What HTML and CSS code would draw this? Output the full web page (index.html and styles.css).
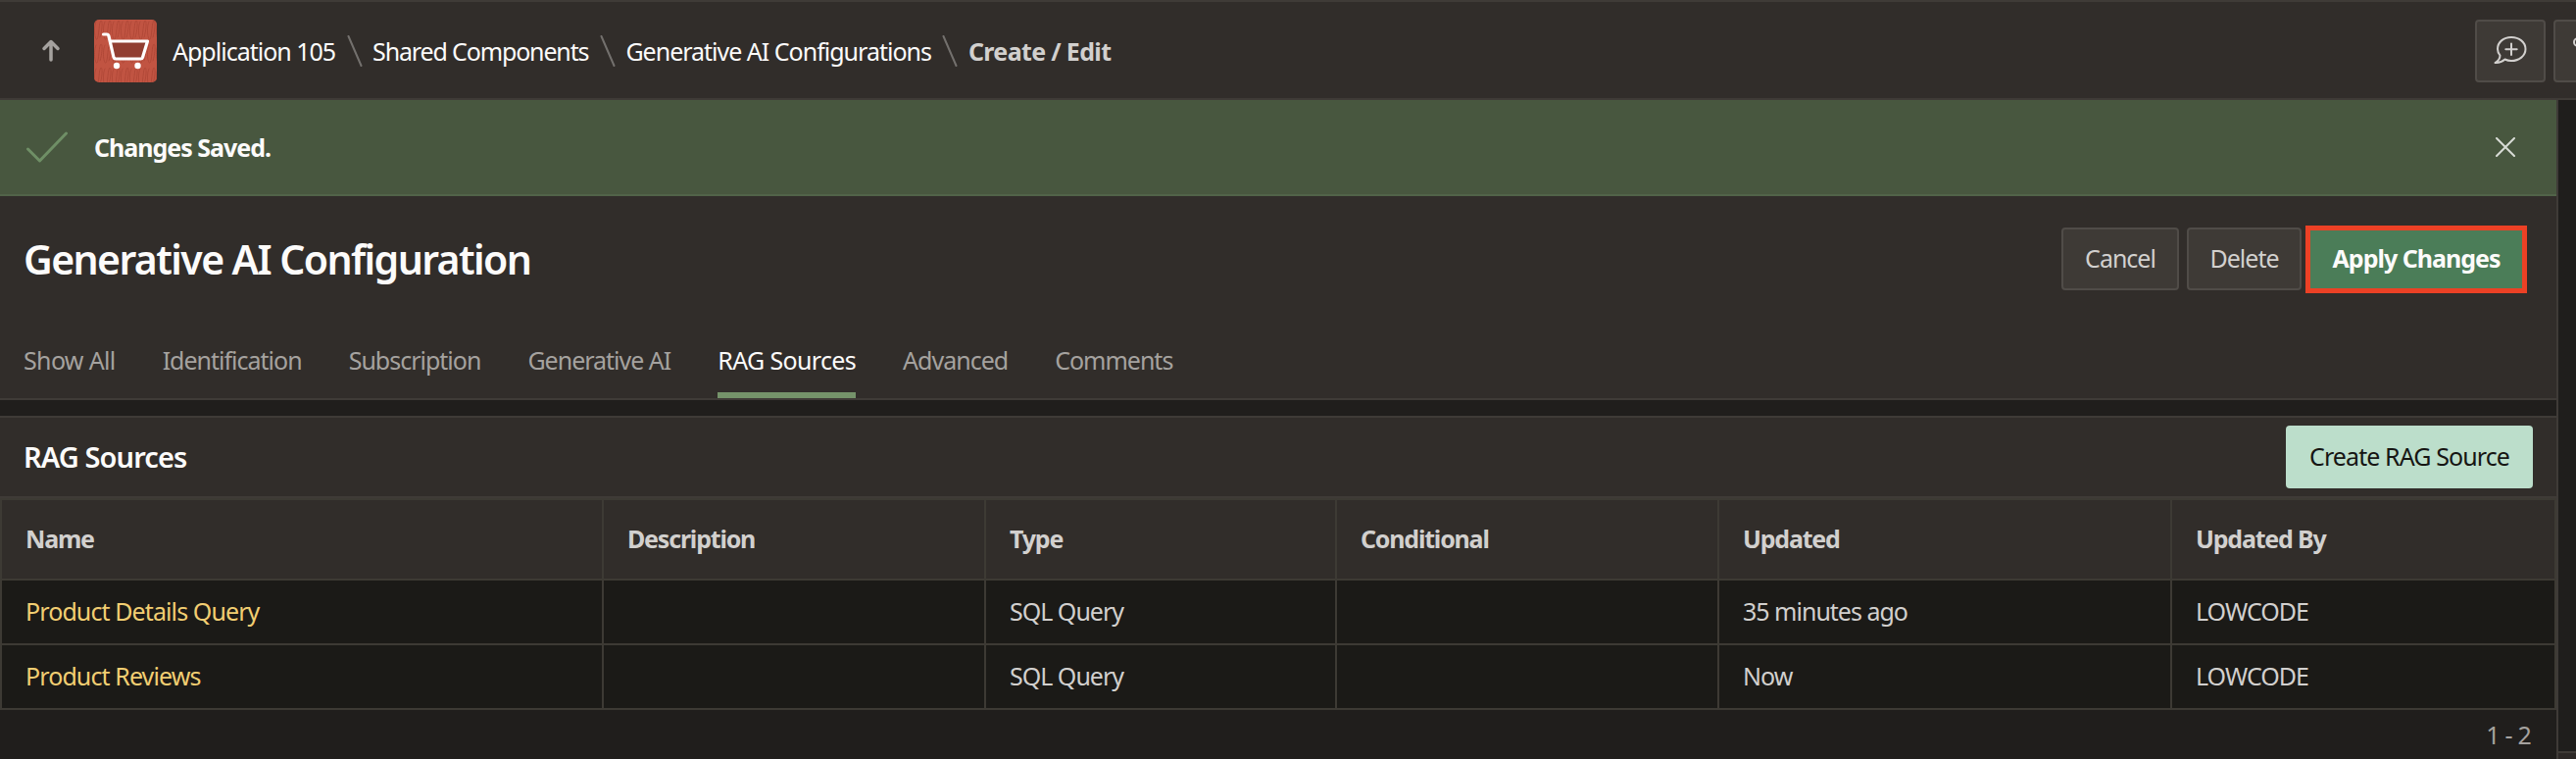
FILE: index.html
```html
<!DOCTYPE html>
<html lang="en">
<head>
<meta charset="utf-8">
<title>Generative AI Configuration</title>
<link rel="stylesheet" href="styles.css">
</head>
<body>
<header class="topbar">
  <svg class="up" viewBox="0 0 24 24"><path d="M12 21V3M5 9.500L12 2.500L19 9.500"/></svg>
  <svg class="app-icon" viewBox="0 0 64 64">
    <defs><pattern id="knit" width="9" height="24" patternUnits="userSpaceOnUse"><path d="M2 2C-1 8 1 22 3 20S5 1 7 1S8 12 6 18"/></pattern></defs>
    <rect width="64" height="64" rx="5" fill="#c15442"/>
    <rect width="64" height="64" rx="5" fill="url(#knit)"/>
    <path class="basket" d="M16 22H55L49 40H20Z"/>
    <path class="cart" d="M9.500 15H13Q14.500 15 15 17L20 38.500Q20.500 40 22 40H47.500Q49 40 49.500 38.500L54.500 22H16.500"/>
    <circle cx="23" cy="47" r="3.200"/><circle cx="44.500" cy="47" r="3.200"/>
  </svg>
  <nav class="crumbs">
    <a>Application 105</a><svg class="sep" viewBox="0 0 16 32"><path d="M1.500 1L14.500 31"/></svg>
    <a class="shared">Shared Components</a><svg class="sep" viewBox="0 0 16 32"><path d="M1.500 1L14.500 31"/></svg>
    <a>Generative AI Configurations</a><svg class="sep" viewBox="0 0 16 32"><path d="M1.500 1L14.500 31"/></svg>
    <b>Create / Edit</b>
  </nav>
  <div class="tools">
    <button class="tool"><svg class="bubble" viewBox="0 0 34 30"><path d="M6.500 20.500C4.500 18 4 16 4 14C4 7 10 2 18 2S32.500 7 32.500 14S26 26 18 26Q14.500 26 11.500 24.500Q7 28.500 1.500 28Q6.500 25 6.500 20.500M18 8.500V20M12.300 14.200H23.700"/></svg></button>
    <button class="tool cut"><svg class="dot" viewBox="0 0 30 30"><circle cx="5" cy="5" r="4"/></svg></button>
  </div>
</header>
<div class="body">
  <main class="main">
    <div class="alert">
      <svg class="check" viewBox="0 0 44 32"><path d="M2.500 18L14.500 30L41.500 2"/></svg>
      <b class="saved">Changes Saved.</b>
      <svg class="close" viewBox="0 0 20 20"><path d="M1 1L19 19M19 1L1 19"/></svg>
    </div>
    <section class="title-region">
      <div class="title-row">
        <h1>Generative AI Configuration</h1>
        <div class="actions">
          <button class="btn cancel">Cancel</button>
          <button class="btn delete">Delete</button>
          <button class="apply">Apply Changes</button>
        </div>
      </div>
      <nav class="tabs">
        <a class="loose">Show All</a><a>Identification</a><a>Subscription</a><a>Generative AI</a><a class="loose active">RAG Sources</a><a>Advanced</a><a>Comments</a>
      </nav>
    </section>
    <section class="sources">
      <div class="sources-head"><h2>RAG Sources</h2><button class="create">Create RAG Source</button></div>
      <div class="grid">
        <b>Name</b><b>Description</b><b>Type</b><b>Conditional</b><b>Updated</b><b>Updated By</b>
        <a>Product Details Query</a><span></span><span>SQL Query</span><span></span><span>35 minutes ago</span><span>LOWCODE</span>
        <a>Product Reviews</a><span></span><span>SQL Query</span><span></span><span>Now</span><span>LOWCODE</span>
      </div>
      <div class="pager">1 - 2</div>
    </section>
  </main>
  <aside class="side"><div class="side-top"></div><div class="side-next"></div></aside>
</div>
</body>
</html>
```
FILE: styles.css
```css
* { box-sizing: border-box; }
body { margin: 0; height: 774px; overflow: hidden; display: flex; flex-direction: column; background: #201e1c; color: #fcfbfa; font: 25px/36px "Noto Sans", sans-serif; letter-spacing: -1px; white-space: nowrap; }
button { font: inherit; letter-spacing: inherit; color: inherit; padding: 0 0 2px; margin: 0; }
h1, h2 { margin: 0; font-weight: 600; }
svg { fill: none; flex: none; display: block; stroke-linecap: round; stroke-linejoin: round; }
.topbar { height: 102px; flex: none; display: flex; align-items: center; background: #312d2a; border-top: 2px solid #3f3b37; border-bottom: 2px solid #3f3b37; padding: 2px 0 0 40px; }
.up { width: 24px; height: 24px; stroke: #a5a29f; stroke-width: 3.5; margin-right: 32px; }
.app-icon { width: 64px; height: 64px; margin-right: 16px; }
.app-icon pattern path { stroke: #b04736; stroke-width: 1; }
.basket { fill: #913e31; }
.cart { stroke: #fff; stroke-width: 3.200; }
.app-icon circle { fill: #fff; }
.crumbs { display: flex; align-items: center; padding-bottom: 1px; }
.crumbs .shared { letter-spacing: -1.15px; }
.crumbs b { color: #d2d0ce; letter-spacing: -0.65px; }
.sep { width: 16px; height: 32px; stroke: #73706d; stroke-width: 2; margin: 0 10.500px 0 11.500px; }
.tools { margin-left: auto; display: flex; gap: 8px; width: 103px; overflow: hidden; }
.tool { width: 72px; height: 64px; flex: none; border: 2px solid #504c48; border-radius: 4px; background: #3e3a36; display: flex; align-items: center; justify-content: center; }
.bubble { width: 34px; height: 30px; stroke: #d2d0ce; stroke-width: 2; }
.cut { justify-content: flex-start; padding-left: 18px; }
.dot { width: 30px; height: 30px; stroke: #d2d0ce; stroke-width: 2; margin-bottom: -4px; }
.body { flex: 1; display: flex; min-height: 0; }
.main { width: 2610px; flex: none; border-right: 2px solid #3f3b37; }
.alert { height: 98px; display: flex; align-items: center; background: #48573f; border-bottom: 2px solid #516349; padding: 0 42px 0 26px; }
.saved { padding-bottom: 1px; }
.check { width: 44px; height: 32px; stroke: #6f8f66; stroke-width: 3; margin-right: 26px; }
.close { width: 20px; height: 20px; stroke: #d8dbd5; stroke-width: 2; margin-left: auto; }
.title-region { height: 208px; background: #312d2a; border-bottom: 2px solid #3f3b37; }
.title-row { height: 128px; display: flex; align-items: center; justify-content: space-between; padding: 0 30px 0 24px; }
h1 { font-size: 41px; line-height: 56px; letter-spacing: -1.6px; }
.actions { display: flex; align-items: center; }
.btn { height: 64px; border: 2px solid #504c48; border-radius: 4px; background: #3e3a36; color: #d2d0ce; }
.cancel { width: 120px; margin-right: 8px; }
.delete { width: 117px; margin-right: 4px; }
.apply { width: 226px; height: 69px; background: #4b7d58; border: 5px solid #ec4125; font-weight: 700; }
.tabs { height: 78px; display: flex; gap: 48px; padding-left: 24px; color: #a5a29f; }
.tabs a { height: 78px; padding-top: 21px; }
.tabs .loose { letter-spacing: -0.65px; }
.tabs .active { color: #fcfbfa; border-bottom: 6px solid #75936a; }
.sources { margin-top: 16px; }
.sources-head { height: 84px; display: flex; align-items: center; justify-content: space-between; background: #312d2a; border-top: 2px solid #3f3b37; border-bottom: 2px solid #3f3b37; padding: 0 24px; }
h2 { font-size: 29px; letter-spacing: -0.9px; }
.create { width: 252px; height: 64px; border: 0; border-radius: 4px; background: #bcdecb; color: #161513; letter-spacing: -0.9px; }
.grid { display: grid; grid-template-columns: 612px 388px 356px 388px 460px 390px; grid-template-rows: 80px 64px 64px; gap: 2px; padding: 2px; background: #3d3a34; }
.grid > * { display: flex; align-items: center; padding: 0 0 2px 24px; background: #1b1a17; color: #d2d0ce; }
.grid > b { background: #312d2a; letter-spacing: -1.2px; }
.grid > a { color: #f2ce72; letter-spacing: -0.9px; }
.pager { padding: 7px 26px 0; text-align: right; color: #a5a29f; letter-spacing: -0.8px; }
.side { flex: 1; background: #1f1e1c; display: flex; flex-direction: column; }
.side-top { height: 664px; }
.side-next { flex: 1; background: #2c2826; border-top: 2px solid #3f3b37; }
```
